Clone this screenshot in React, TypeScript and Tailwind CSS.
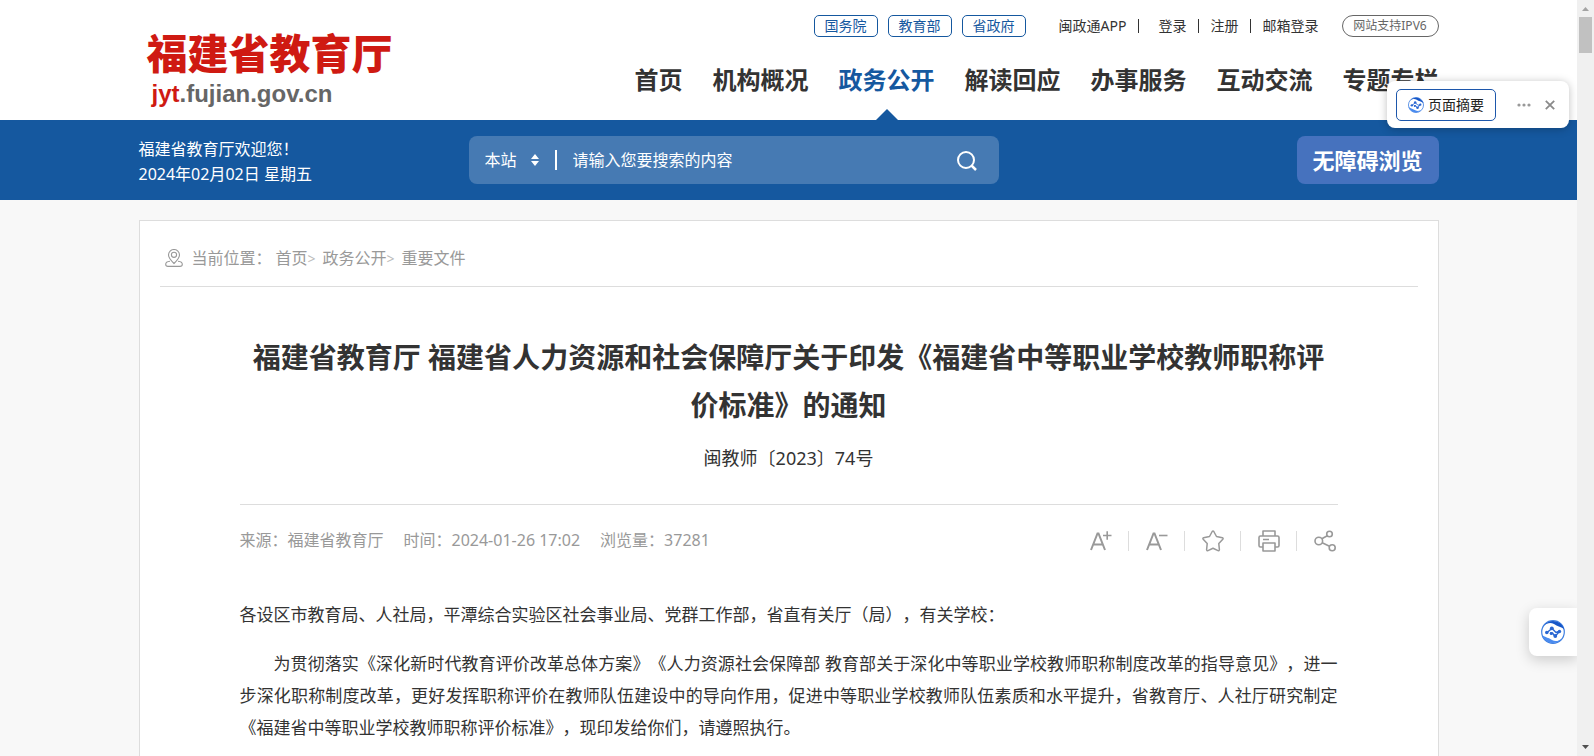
import React from "react";

interface ILink {
  title: string;
  active?: boolean;
}

const departments: string[] = ["国务院", "教育部", "省政府"];

const navItems: ILink[] = [
  { title: "首页" },
  { title: "机构概况" },
  { title: "政务公开", active: true },
  { title: "解读回应" },
  { title: "办事服务" },
  { title: "互动交流" },
  { title: "专题专栏" },
];

const toolStyle = "block w-[22px] h-[22px] text-[#999999]";

function AssistantLogo({ className }: { className: string }) {
  return (
    <svg viewBox="0 0 24 24" className={className} fill="none" aria-hidden="true">
      <circle cx="12" cy="12" r="11.300" stroke="#3f7fe0" strokeWidth="1.200" />
      <path d="M3 5.500C8-1.500 20-.5 23.300 9.500c-4-3.500-7-3-10.300-5.500C9.500 2 6 3 3 5.500z" fill="#1757c8" />
      <path d="M21 18.500C16 25.500 4 24.500.7 14.500c4 3.500 7 3 10.300 5.500 3.500 2 7 1 10-1.500z" fill="#4a8bef" />
      <path d="M6 12.500L11 8.500l4 4 4-1.500M9 13l2.500 0 2.500 3.500 4.500-5" stroke="#2a67d2" strokeWidth="1.400" />
      <circle cx="5.800" cy="12.500" r="1.800" fill="#2a67d2" />
      <circle cx="10.800" cy="8.300" r="1.900" fill="#2a67d2" />
      <circle cx="10.300" cy="13.500" r="1.600" fill="#2a67d2" />
      <circle cx="14.300" cy="16" r="1.900" fill="#2a67d2" />
      <circle cx="18.500" cy="11.500" r="1.700" fill="#2a67d2" />
    </svg>
  );
}

function Header() {
  return (
    <header className="bg-white">
      <div className="w-full max-w-[1300px] h-[120px] mx-auto flex justify-between">
        <a href="#" className="block pl-2 pt-6 whitespace-nowrap">
          <span className="block text-[41px] leading-[58px] font-black text-[#cf1a12]">
            福建省教育厅
          </span>
          <span className="block pl-[5px] text-[24px] leading-[24px] font-bold text-[#666666] font-['Liberation_Sans',sans-serif]">
            <span className="text-[#cf1a12]">jyt</span>.fujian.gov.cn
          </span>
        </a>

        <div className="flex flex-col items-end whitespace-nowrap">
          <div className="flex items-center mt-[15px] text-[14px] leading-[20px]">
            <div className="flex gap-[10px] mr-[33px]">
              {departments.map((name) => (
                <a
                  key={name}
                  href="#"
                  className="w-16 h-[22px] flex items-center justify-center border border-[#15589f] rounded-[5px] text-[#15589f]"
                >
                  {name}
                </a>
              ))}
            </div>
            <a href="#">闽政通APP</a>
            <i className="w-px h-[14px] bg-[#333333] ml-[11px] mr-5" />
            <a href="#">登录</a>
            <i className="w-px h-[14px] bg-[#333333] ml-[11px] mr-3" />
            <a href="#">注册</a>
            <i className="w-px h-[14px] bg-[#333333] ml-[11px] mr-3" />
            <a href="#">邮箱登录</a>
            <a
              href="#"
              className="w-[97px] h-[22px] ml-[23px] flex items-center justify-center border border-[#666666] rounded-full text-[12px] text-[#666666]"
            >
              网站支持IPV6
            </a>
          </div>

          <nav className="flex gap-[30px] mt-[25px] text-[24px] leading-[36px] font-bold">
            {navItems.map((item) => (
              <a
                key={item.title}
                href="#"
                className={
                  item.active
                    ? "relative h-[58px] text-[#15589f]"
                    : "h-[58px]"
                }
              >
                {item.title}
                {item.active ? (
                  <svg viewBox="0 0 22 11" className="absolute bottom-0 left-[37px] w-[22px] h-[11px]">
                    <path d="M0 11L11 0l11 11z" fill="#15589f" />
                  </svg>
                ) : null}
              </a>
            ))}
          </nav>
        </div>
      </div>
    </header>
  );
}

function SearchBar() {
  return (
    <div className="bg-[#15589f] text-white">
      <div className="w-full max-w-[1300px] h-20 mx-auto flex items-center justify-between">
        <div className="w-[329px] pt-1 text-[16px] leading-[25px]">
          <p>福建省教育厅欢迎您！</p>
          <p>2024年02月02日 星期五</p>
        </div>
        <form className="w-[530px] h-12 flex items-center rounded-lg bg-[#467ab3] text-[16px] px-4 pr-[21px]">
          <select
            aria-label="搜索范围"
            className="w-[46px] h-8 leading-8 appearance-none bg-transparent outline-none"
          >
            <option>本站</option>
          </select>
          <svg viewBox="0 0 8 12" className="w-2 h-3" fill="#ffffff">
            <path d="M4 0l4 5H0zM4 12L0 7h8z" />
          </svg>
          <i className="w-0.5 h-5 bg-white mx-4" />
          <input
            type="text"
            aria-label="关键词"
            placeholder="请输入您要搜索的内容"
            className="flex-1 min-w-0 h-8 bg-transparent outline-none placeholder:text-white"
          />
          <button type="button" aria-label="搜索">
            <svg viewBox="0 0 22 22" className="w-[22px] h-[22px]" fill="none" stroke="#ffffff" strokeWidth="2">
              <circle cx="10" cy="11" r="8" />
              <path d="M15.500 16.500l4.500 4.500" strokeWidth="2.500" />
            </svg>
          </button>
        </form>
        <div className="w-[439px] flex justify-end">
          <button type="button" className="w-[142px] h-12 rounded-lg bg-[#4672be] text-[22px] font-bold">
            无障碍浏览
          </button>
        </div>
      </div>
    </div>
  );
}

function Tools() {
  return (
    <div className="flex items-center pr-0.5">
      <button type="button" aria-label="放大字体">
        <svg viewBox="0 0 22 22" className={toolStyle} fill="none" stroke="currentColor" strokeWidth="2">
          <path d="M1 20L7.500 3.500h1L15 20M3.500 14.500h9" />
          <path d="M13 5.500h8.500M17.200 1.200v8.500" strokeWidth="1.600" />
        </svg>
      </button>
      <i className="w-px h-5 bg-[#dddddd] ml-4 mr-[17px]" />
      <button type="button" aria-label="缩小字体">
        <svg viewBox="0 0 22 22" className={toolStyle} fill="none" stroke="currentColor" strokeWidth="2">
          <path d="M1 20L7.500 3.500h1L15 20M3.500 14.500h9" />
          <path d="M13 5.500h8.500" strokeWidth="1.600" />
        </svg>
      </button>
      <i className="w-px h-5 bg-[#dddddd] ml-4 mr-[17px]" />
      <button type="button" aria-label="收藏">
        <svg viewBox="0 0 22 22" className={toolStyle} fill="none" stroke="currentColor" strokeWidth="1.500" strokeLinejoin="round">
          <path d="M10.200 1.500q.8-1 1.600 0l2.700 5 5.900 1.200q1.200.5.400 1.600l-4 4.300.6 6.200q-.1 1.200-1.400.8L11 18.200l-5 2.400q-1.300.4-1.400-.8l.6-6.200-4-4.300q-.8-1.100.4-1.600l5.900-1.200z" />
        </svg>
      </button>
      <i className="w-px h-5 bg-[#dddddd] ml-4 mr-[17px]" />
      <button type="button" aria-label="打印">
        <svg viewBox="0 0 22 22" className={toolStyle} fill="none" stroke="currentColor" strokeWidth="1.600" strokeLinejoin="round">
          <path d="M5 6V1h12v5" />
          <path d="M5 17H2.500Q1 17 1 15.500v-8Q1 6 2.500 6h17Q21 6 21 7.500v8q0 1.500-1.500 1.500H17" />
          <path d="M5 13h12v8H5zM5 9.500h6" />
        </svg>
      </button>
      <i className="w-px h-5 bg-[#dddddd] ml-4 mr-[17px]" />
      <button type="button" aria-label="分享">
        <svg viewBox="0 0 22 22" className={toolStyle} fill="none" stroke="currentColor" strokeWidth="1.600">
          <circle cx="4.800" cy="11" r="3.800" />
          <circle cx="15.500" cy="4" r="2.800" />
          <circle cx="18.200" cy="17.800" r="3" />
          <path d="M7.800 8.700l5.500-3M8.200 12.800l7.300 3.500" />
        </svg>
      </button>
    </div>
  );
}

function Article() {
  return (
    <main className="w-full max-w-[1300px] mx-auto mt-5 px-5 bg-white border border-[#dddddd]">
      <div className="h-[66px] pt-[9px] pl-[5px] flex items-center border-b border-[#dddddd] text-[16px] text-[#999999]">
        <svg viewBox="0 0 18 18" className="w-[18px] h-[18px] mr-[9px]" fill="none" stroke="currentColor" strokeWidth="1.100">
          <path d="M9 14.500C5.500 11 3.500 8.500 3.500 6a5.500 5.500 0 0 1 11 0c0 2.500-2 5-5.500 8.500z" />
          <circle cx="9" cy="5.800" r="2.600" />
          <path d="M5 12.200c-2.300.2-4.300 1.300-4.300 3 0 1.200 1 2.200 2.300 2.200h12c1.300 0 2.300-1 2.300-2.200 0-1.700-2-2.800-4.300-3" />
        </svg>
        <span className="mr-1">当前位置：</span>
        <a href="#">首页</a>
        <span className="text-[14px] w-[15px] text-[#bbbbbb]">&gt;</span>
        <a href="#">政务公开</a>
        <span className="text-[14px] w-[15px] text-[#bbbbbb]">&gt;</span>
        <a href="#">重要文件</a>
      </div>

      <div className="px-20 pt-[46px]">
        <h1 className="text-[28px] leading-[48px] font-bold text-center [text-spacing-trim:space-all]">
          福建省教育厅 福建省人力资源和社会保障厅关于印发《福建省中等职业学校教师职称评价标准》的通知
        </h1>
        <p className="mt-[14px] text-[18px] leading-[30px] text-center">闽教师〔2023〕74号</p>
        <div className="mt-[31px] pt-[18px] border-t border-[#dddddd] flex items-center justify-between">
          <div className="flex gap-[20px] pb-0.5 text-[16px] leading-[34px] text-[#999999]">
            <span>来源：福建省教育厅</span>
            <span>时间：2024-01-26 17:02</span>
            <span>浏览量：37281</span>
          </div>
          <Tools />
        </div>

        <div className="mt-10 pb-10 text-[17px] leading-[32px] text-justify [text-spacing-trim:space-all]">
          <p>
            各设区市教育局、人社局，平潭综合实验区社会事业局、党群工作部，省直有关厅（局），有关学校：
          </p>
          <p className="mt-[17px] indent-[34px]">
            为贯彻落实《深化新时代教育评价改革总体方案》《人力资源社会保障部 教育部关于深化中等职业学校教师职称制度改革的指导意见》，进一步深化职称制度改革，更好发挥职称评价在教师队伍建设中的导向作用，促进中等职业学校教师队伍素质和水平提升，省教育厅、人社厅研究制定《福建省中等职业学校教师职称评价标准》，现印发给你们，请遵照执行。
          </p>
        </div>
      </div>
    </main>
  );
}

export default function App() {
  return (
    <div className="flex h-screen overflow-hidden bg-[#f8f8f8] text-[#333333] font-['Noto_Sans','Noto_Sans_CJK_SC',sans-serif]">
      <div className="relative flex-1 min-w-0 overflow-hidden">
        <Header />
        <SearchBar />
        <Article />

        {/* page summary popup */}
        <div className="absolute top-[81px] right-2 w-[182px] h-[47px] flex items-center pl-[9px] pr-[14px] rounded-lg bg-white shadow-[0_1px_8px_rgba(0,0,0,0.25)]">
          <button
            type="button"
            className="w-[100px] h-8 flex items-center justify-center gap-1 rounded-[5px] border border-[#1d57ab] text-[14px] text-[#222222] whitespace-nowrap"
          >
            <AssistantLogo className="w-4 h-4" />
            页面摘要
          </button>
          <button type="button" aria-label="更多" className="ml-auto mr-[14px]">
            <svg viewBox="0 0 14 4" className="w-[14px] h-1" fill="#999999">
              <circle cx="2" cy="2" r="1.600" />
              <circle cx="7" cy="2" r="1.600" />
              <circle cx="12" cy="2" r="1.600" />
            </svg>
          </button>
          <button type="button" aria-label="关闭">
            <svg viewBox="0 0 10 10" className="w-[10px] h-[10px]" stroke="#8a8a8a" strokeWidth="1.800">
              <path d="M.8.8l8.400 8.400M9.200.8L.8 9.200" />
            </svg>
          </button>
        </div>

        {/* side assistant button */}
        <button
          type="button"
          aria-label="助手"
          className="absolute right-0 bottom-[100px] w-12 h-12 flex items-center justify-center rounded-l-lg bg-white shadow-[0_4px_14px_rgba(0,0,0,0.18)]"
        >
          <AssistantLogo className="w-6 h-6" />
        </button>
      </div>

      {/* scrollbar */}
      <div className="w-[17px] shrink-0 flex flex-col items-center bg-[#f0f0f0]">
        <svg viewBox="0 0 17 17" className="w-[17px] h-[17px]" fill="#a3a3a3">
          <path d="M5 11l3.500-4 3.500 4z" />
        </svg>
        <div className="w-[13px] h-9 bg-[#c1c1c1]" />
        <svg viewBox="0 0 17 17" className="w-[17px] h-[17px] mt-auto" fill="#505050">
          <path d="M5 6l3.500 4L12 6z" />
        </svg>
      </div>
    </div>
  );
}
